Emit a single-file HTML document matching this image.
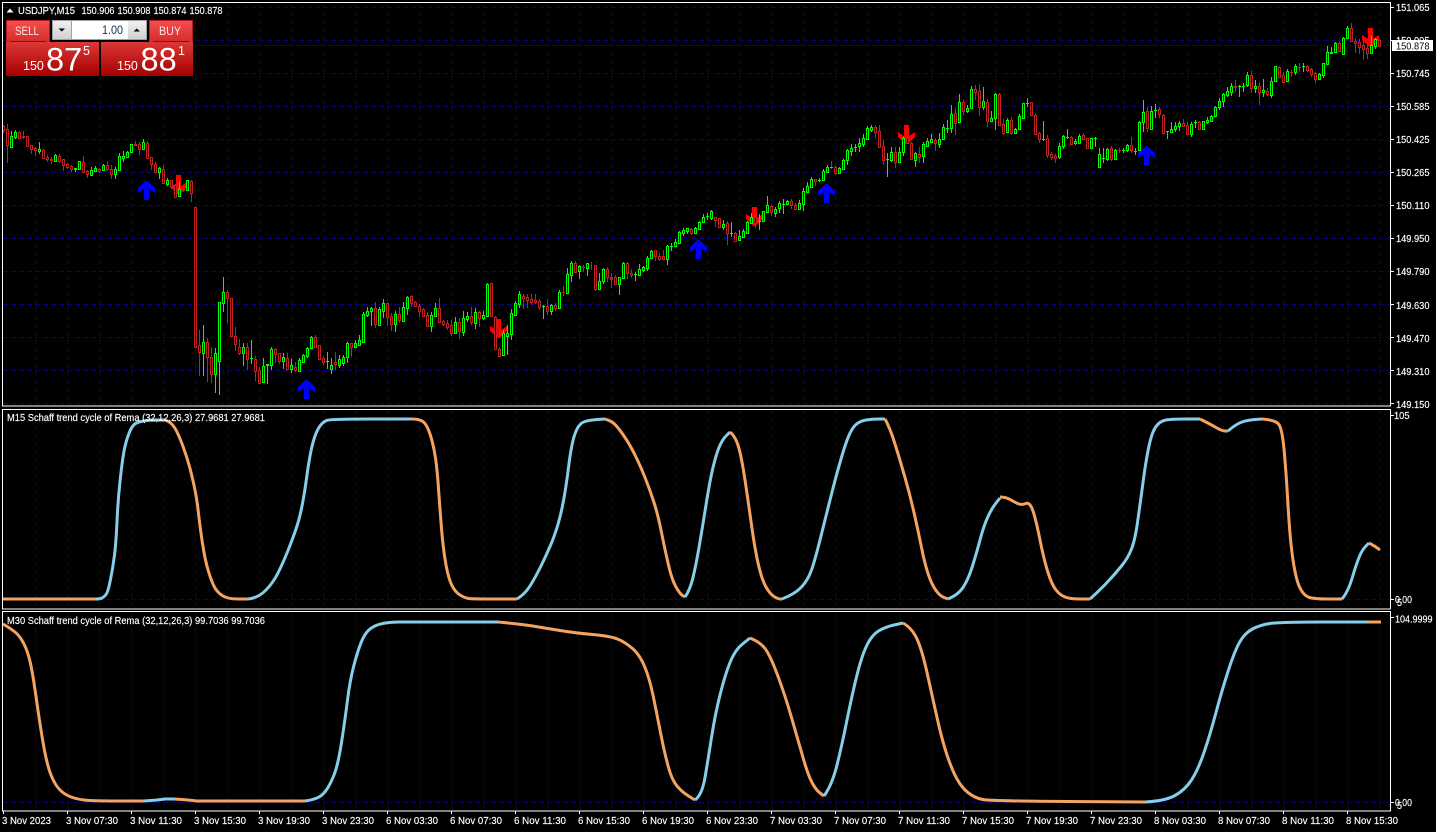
<!DOCTYPE html>
<html><head><meta charset="utf-8"><title>USDJPY,M15</title>
<style>
html,body{margin:0;padding:0;background:#000;width:1436px;height:832px;overflow:hidden}
svg{display:block}
text{font-family:"Liberation Sans",sans-serif;font-size:10.5px;fill:#fff}
.x text{stroke:#fff;stroke-width:.15px}
.c{shape-rendering:crispEdges}
.o{fill:none;stroke:#F4A460;stroke-width:3;stroke-linejoin:round}
.b{fill:none;stroke:#87CEEB;stroke-width:3;stroke-linejoin:round}
</style></head><body>
<svg width="1436" height="832" viewBox="0 0 1436 832" xmlns="http://www.w3.org/2000/svg">
<defs>
<linearGradient id="g1" x1="0" y1="0" x2="0" y2="1"><stop offset="0" stop-color="#f55050"/><stop offset="1" stop-color="#d42c2c"/></linearGradient>
<linearGradient id="g2" x1="0" y1="0" x2="0" y2="1"><stop offset="0" stop-color="#dc3838"/><stop offset="1" stop-color="#a60000"/></linearGradient>
<linearGradient id="g3" x1="0" y1="0" x2="0" y2="1"><stop offset="0" stop-color="#f0f0f0"/><stop offset="1" stop-color="#d0d0d0"/></linearGradient>
<clipPath id="w0"><rect x="3" y="3" width="1387" height="403"/></clipPath>
<clipPath id="w1"><rect x="3" y="410" width="1387" height="199"/></clipPath>
<clipPath id="w2"><rect x="3" y="612" width="1387" height="199"/></clipPath>
</defs>
<rect width="1436" height="832" fill="#000"/>

<!-- grid -->
<g class="c" fill="none" stroke="#00008b" stroke-width="1" stroke-dasharray="5 3">
<path d="M3 7.5H1390M3 40.5H1390M3 73.5H1390M3 106.5H1390M3 139.5H1390M3 172.5H1390M3 205.5H1390M3 238.5H1390M3 271.5H1390M3 304.5H1390M3 337.5H1390M3 370.5H1390M3 403.5H1390M3 599.5H1390M3 802.5H1390"/>
<path d="M35.5 3V406M67.5 3V406M99.5 3V406M131.5 3V406M163.5 3V406M195.5 3V406M227.5 3V406M259.5 3V406M291.5 3V406M323.5 3V406M355.5 3V406M387.5 3V406M419.5 3V406M451.5 3V406M483.5 3V406M515.5 3V406M547.5 3V406M579.5 3V406M611.5 3V406M643.5 3V406M675.5 3V406M707.5 3V406M739.5 3V406M771.5 3V406M803.5 3V406M835.5 3V406M867.5 3V406M899.5 3V406M931.5 3V406M963.5 3V406M995.5 3V406M1027.5 3V406M1059.5 3V406M1091.5 3V406M1123.5 3V406M1155.5 3V406M1187.5 3V406M1219.5 3V406M1251.5 3V406M1283.5 3V406M1315.5 3V406M1347.5 3V406M1379.5 3V406"/>
<path d="M35.5 410V609M67.5 410V609M99.5 410V609M131.5 410V609M163.5 410V609M195.5 410V609M227.5 410V609M259.5 410V609M291.5 410V609M323.5 410V609M355.5 410V609M387.5 410V609M419.5 410V609M451.5 410V609M483.5 410V609M515.5 410V609M547.5 410V609M579.5 410V609M611.5 410V609M643.5 410V609M675.5 410V609M707.5 410V609M739.5 410V609M771.5 410V609M803.5 410V609M835.5 410V609M867.5 410V609M899.5 410V609M931.5 410V609M963.5 410V609M995.5 410V609M1027.5 410V609M1059.5 410V609M1091.5 410V609M1123.5 410V609M1155.5 410V609M1187.5 410V609M1219.5 410V609M1251.5 410V609M1283.5 410V609M1315.5 410V609M1347.5 410V609M1379.5 410V609"/>
<path d="M35.5 612V811M67.5 612V811M99.5 612V811M131.5 612V811M163.5 612V811M195.5 612V811M227.5 612V811M259.5 612V811M291.5 612V811M323.5 612V811M355.5 612V811M387.5 612V811M419.5 612V811M451.5 612V811M483.5 612V811M515.5 612V811M547.5 612V811M579.5 612V811M611.5 612V811M643.5 612V811M675.5 612V811M707.5 612V811M739.5 612V811M771.5 612V811M803.5 612V811M835.5 612V811M867.5 612V811M899.5 612V811M931.5 612V811M963.5 612V811M995.5 612V811M1027.5 612V811M1059.5 612V811M1091.5 612V811M1123.5 612V811M1155.5 612V811M1187.5 612V811M1219.5 612V811M1251.5 612V811M1283.5 612V811M1315.5 612V811M1347.5 612V811M1379.5 612V811"/>
</g>
<path class="c" d="M3 45.5H1390" stroke="#00008b" fill="none"/>

<!-- arrows -->
<path fill="#0000ff" d="M145.5 181H147.5L155 188V193L149 189V200H144V189L138 193V188ZM305.5 380H307.5L315 387V392L309 388V399H304V388L298 392V387ZM697.5 240H699.5L707 247V252L701 248V259H696V248L690 252V247ZM825.5 184H827.5L835 191V196L829 192V203H824V192L818 196V191ZM1145.5 146H1147.5L1155 153V158L1149 154V165H1144V154L1138 158V153Z"/>
<path fill="#ff0000" d="M176 175H181V186L187 182V187L179.5 194H177.5L170 187V182L176 186ZM496 319H501V330L507 326V331L499.5 338H497.5L490 331V326L496 330ZM752 207H757V218L763 214V219L755.5 226H753.5L746 219V214L752 218ZM904 125H909V136L915 132V137L907.5 144H905.5L898 137V132L904 136ZM1368 28H1373V39L1379 35V40L1371.5 47H1369.5L1362 40V35L1368 39Z"/>

<!-- candles -->
<g class="c" clip-path="url(#w0)" stroke-width="1">
<path fill="none" stroke="#c02222" d="M3.5 125V133M7.5 124V163M19.5 131V139M23.5 131V139M27.5 136V146M31.5 145V154M35.5 147V156M43.5 149V158M47.5 155V162M51.5 157V164M59.5 154V163M63.5 159V171M67.5 163V169M71.5 165V172M83.5 156V172M87.5 170V178M99.5 168V173M107.5 161V171M111.5 165V179M135.5 141V146M139.5 142V155M147.5 141V158M151.5 157V170M155.5 162V172M163.5 165V184M171.5 180V189M175.5 184V197M183.5 188V192M191.5 180V202M195.5 207V347M199.5 330V376M207.5 338V382M211.5 347V383M227.5 290V323M231.5 298V336M235.5 327V351M239.5 339V355M247.5 343V370M255.5 356V381M259.5 367V383M275.5 348V363M279.5 353V364M287.5 353V369M295.5 362V372M315.5 335V347M319.5 345V359M323.5 356V365M335.5 352V370M351.5 343V357M375.5 302V328M387.5 303V326M391.5 313V331M399.5 307V323M411.5 295V307M415.5 301V307M419.5 304V317M423.5 308V317M427.5 312V326M439.5 298V323M443.5 320V326M447.5 320V330M451.5 320V336M459.5 318V339M471.5 307V325M479.5 311V327M491.5 283V317M495.5 316V349M499.5 347V357M523.5 294V309M527.5 294V308M531.5 294V305M535.5 294V304M539.5 299V310M547.5 299V315M555.5 303V311M563.5 286V296M575.5 261V273M583.5 265V272M591.5 262V270M595.5 265V291M607.5 267V282M611.5 273V288M615.5 275V285M627.5 262V279M631.5 269V278M655.5 250V261M659.5 253V261M663.5 250V260M691.5 228V235M715.5 217V227M719.5 218V228M727.5 221V245M735.5 232V242M755.5 213V228M771.5 205V216M791.5 199V209M795.5 203V210M815.5 179V186M831.5 161V169M835.5 166V175M875.5 125V138M879.5 125V147M883.5 140V165M895.5 147V168M907.5 135V144M911.5 142V160M919.5 147V163M935.5 138V151M955.5 108V135M963.5 100V115M975.5 85V100M979.5 84V116M987.5 99V127M999.5 93V125M1003.5 119V135M1011.5 117V135M1031.5 102V116M1035.5 113V135M1039.5 132V143M1047.5 135V158M1051.5 152V160M1055.5 154V163M1071.5 136V144M1083.5 133V140M1087.5 138V149M1111.5 146V161M1119.5 148V153M1131.5 137V153M1147.5 107V132M1159.5 107V118M1163.5 114V133M1183.5 119V127M1187.5 122V134M1199.5 121V130M1235.5 80V92M1251.5 71V93M1259.5 82V105M1267.5 88V96M1279.5 66V78M1283.5 72V82M1291.5 70V77M1299.5 63V72M1307.5 65V72M1311.5 68V77M1315.5 72V83M1339.5 41V52M1351.5 23V42M1355.5 38V53M1359.5 39V54M1363.5 41V60M1367.5 43V59M1379.5 39V47"/>
<path fill="none" stroke="#00ff00" d="M11.5 131V147M15.5 130V139M39.5 142V154M55.5 154V162M75.5 168V172M79.5 161V169M91.5 167V175M95.5 166V172M103.5 164V171M115.5 167V179M119.5 153V170M123.5 151V162M127.5 151V157M131.5 144V153M143.5 139V150M159.5 167V179M167.5 178V186M179.5 182V196M187.5 180V190M203.5 325V376M215.5 348V393M219.5 302V395M223.5 277V312M243.5 343V366M251.5 340V364M263.5 358V383M267.5 364V384M271.5 347V370M283.5 353V369M291.5 359V373M299.5 358V371M303.5 354V363M307.5 347V358M311.5 336V349M327.5 352V369M331.5 358V374M339.5 355V368M343.5 355V366M347.5 342V363M355.5 340V348M359.5 335V345M363.5 312V343M367.5 307V317M371.5 307V326M379.5 307V325M383.5 299V318M395.5 311V332M403.5 302V321M407.5 296V315M431.5 312V332M435.5 303V316M455.5 317V334M463.5 311V336M467.5 312V322M475.5 308V329M483.5 311V320M487.5 283V317M503.5 330V356M507.5 325V355M511.5 309V340M515.5 301V315M519.5 291V308M543.5 305V319M551.5 304V315M559.5 290V309M567.5 268V294M571.5 261V282M579.5 265V279M587.5 263V276M599.5 273V290M603.5 268V284M619.5 277V295M623.5 262V278M635.5 272V281M639.5 264V275M643.5 266V272M647.5 256V271M651.5 250V259M667.5 245V265M671.5 243V251M675.5 239V247M679.5 231V243M683.5 228V236M687.5 228V234M695.5 227V234M699.5 221V229M703.5 214V223M707.5 213V220M711.5 210V220M723.5 220V230M731.5 222V237M739.5 230V241M743.5 229V237M747.5 221V234M751.5 213V224M759.5 214V230M763.5 211V222M767.5 196V212M775.5 207V217M779.5 201V213M783.5 199V214M787.5 200V204M799.5 200V209M803.5 188V211M807.5 182V193M811.5 177V188M819.5 178V182M823.5 169V181M827.5 165V173M839.5 167V173M843.5 159V169M847.5 149V165M851.5 144V156M855.5 144V152M859.5 138V152M863.5 134V147M867.5 126V139M871.5 125V132M887.5 153V177M891.5 147V162M899.5 147V162M903.5 137V156M915.5 152V167M923.5 142V163M927.5 138V147M931.5 134V143M939.5 133V148M943.5 124V140M947.5 120V133M951.5 105V133M959.5 94V123M967.5 105V113M971.5 86V109M983.5 87V110M991.5 111V122M995.5 93V130M1007.5 118V133M1015.5 128V134M1019.5 114V130M1023.5 103V118M1027.5 98V107M1043.5 121V141M1059.5 143V159M1063.5 135V149M1067.5 129V139M1075.5 139V145M1079.5 134V143M1091.5 138V149M1095.5 137V147M1099.5 148V167M1103.5 148V163M1107.5 148V161M1115.5 149V159M1123.5 148V153M1127.5 144V152M1135.5 148V155M1139.5 121V151M1143.5 100V132M1151.5 106V129M1155.5 104V118M1167.5 131V139M1171.5 122V133M1175.5 122V132M1179.5 121V131M1191.5 122V137M1195.5 120V128M1203.5 121V130M1207.5 117V124M1211.5 115V122M1215.5 106V117M1219.5 98V110M1223.5 93V107M1227.5 87V97M1231.5 83V96M1239.5 85V97M1243.5 83V92M1247.5 72V87M1255.5 80V93M1263.5 79V97M1271.5 77V98M1275.5 66V82M1287.5 69V82M1295.5 64V75M1303.5 63V72M1319.5 73V79M1323.5 63V78M1327.5 46V65M1331.5 47V54M1335.5 42V53M1343.5 37V54M1347.5 26V39M1371.5 36V54M1375.5 38V49"/>
<path fill="#000" stroke="#c02222" d="M2.5 126.5h2V130.5h-2zM6.5 129.5h2V145.5h-2zM18.5 132.5h2V138.5h-2zM22.5 136.5h2V137.5h-2zM26.5 136.5h2V146.5h-2zM30.5 145.5h2V149.5h-2zM34.5 148.5h2V150.5h-2zM42.5 150.5h2V158.5h-2zM46.5 157.5h2V159.5h-2zM50.5 159.5h2V160.5h-2zM58.5 156.5h2V161.5h-2zM62.5 159.5h2V165.5h-2zM66.5 164.5h2V167.5h-2zM70.5 166.5h2V169.5h-2zM82.5 162.5h2V172.5h-2zM86.5 171.5h2V174.5h-2zM98.5 169.5h2V171.5h-2zM106.5 165.5h2V169.5h-2zM110.5 169.5h2V174.5h-2zM134.5 144.5h2V145.5h-2zM138.5 144.5h2V149.5h-2zM146.5 143.5h2V158.5h-2zM150.5 157.5h2V164.5h-2zM154.5 164.5h2V172.5h-2zM162.5 169.5h2V183.5h-2zM170.5 180.5h2V186.5h-2zM174.5 185.5h2V197.5h-2zM182.5 189.5h2V190.5h-2zM190.5 181.5h2V193.5h-2zM194.5 207.5h2V347.5h-2zM198.5 345.5h2V352.5h-2zM206.5 342.5h2V357.5h-2zM210.5 357.5h2V374.5h-2zM226.5 292.5h2V298.5h-2zM230.5 298.5h2V336.5h-2zM234.5 336.5h2V344.5h-2zM238.5 347.5h2V353.5h-2zM246.5 347.5h2V359.5h-2zM254.5 359.5h2V371.5h-2zM258.5 370.5h2V383.5h-2zM274.5 349.5h2V354.5h-2zM278.5 353.5h2V361.5h-2zM286.5 358.5h2V369.5h-2zM294.5 367.5h2V370.5h-2zM314.5 337.5h2V347.5h-2zM318.5 345.5h2V359.5h-2zM322.5 358.5h2V362.5h-2zM334.5 362.5h2V364.5h-2zM350.5 343.5h2V347.5h-2zM374.5 308.5h2V324.5h-2zM386.5 303.5h2V317.5h-2zM390.5 316.5h2V324.5h-2zM398.5 314.5h2V320.5h-2zM410.5 296.5h2V303.5h-2zM414.5 302.5h2V306.5h-2zM418.5 306.5h2V311.5h-2zM422.5 309.5h2V316.5h-2zM426.5 315.5h2V326.5h-2zM438.5 308.5h2V322.5h-2zM442.5 321.5h2V324.5h-2zM446.5 323.5h2V327.5h-2zM450.5 325.5h2V333.5h-2zM458.5 322.5h2V331.5h-2zM470.5 316.5h2V322.5h-2zM478.5 312.5h2V318.5h-2zM490.5 283.5h2V316.5h-2zM494.5 317.5h2V349.5h-2zM498.5 349.5h2V356.5h-2zM522.5 296.5h2V298.5h-2zM526.5 297.5h2V300.5h-2zM530.5 299.5h2V302.5h-2zM534.5 300.5h2V302.5h-2zM538.5 301.5h2V307.5h-2zM546.5 306.5h2V311.5h-2zM554.5 305.5h2V308.5h-2zM574.5 263.5h2V272.5h-2zM594.5 265.5h2V289.5h-2zM606.5 269.5h2V277.5h-2zM610.5 277.5h2V279.5h-2zM614.5 277.5h2V284.5h-2zM626.5 263.5h2V273.5h-2zM630.5 273.5h2V275.5h-2zM654.5 250.5h2V256.5h-2zM658.5 256.5h2V259.5h-2zM662.5 256.5h2V259.5h-2zM690.5 229.5h2V233.5h-2zM714.5 217.5h2V220.5h-2zM718.5 218.5h2V227.5h-2zM726.5 223.5h2V233.5h-2zM734.5 233.5h2V241.5h-2zM754.5 217.5h2V223.5h-2zM770.5 206.5h2V212.5h-2zM790.5 201.5h2V205.5h-2zM794.5 205.5h2V209.5h-2zM814.5 179.5h2V181.5h-2zM834.5 167.5h2V173.5h-2zM874.5 127.5h2V132.5h-2zM878.5 131.5h2V147.5h-2zM882.5 146.5h2V160.5h-2zM894.5 152.5h2V162.5h-2zM906.5 138.5h2V143.5h-2zM910.5 143.5h2V159.5h-2zM918.5 154.5h2V157.5h-2zM934.5 140.5h2V143.5h-2zM954.5 113.5h2V123.5h-2zM962.5 102.5h2V111.5h-2zM974.5 89.5h2V92.5h-2zM978.5 91.5h2V107.5h-2zM986.5 102.5h2V121.5h-2zM998.5 94.5h2V125.5h-2zM1002.5 124.5h2V133.5h-2zM1010.5 120.5h2V133.5h-2zM1030.5 102.5h2V115.5h-2zM1034.5 115.5h2V134.5h-2zM1038.5 133.5h2V139.5h-2zM1046.5 138.5h2V155.5h-2zM1050.5 154.5h2V157.5h-2zM1054.5 156.5h2V158.5h-2zM1070.5 137.5h2V144.5h-2zM1082.5 135.5h2V139.5h-2zM1086.5 138.5h2V148.5h-2zM1110.5 148.5h2V159.5h-2zM1130.5 145.5h2V150.5h-2zM1146.5 111.5h2V128.5h-2zM1158.5 109.5h2V114.5h-2zM1162.5 115.5h2V133.5h-2zM1182.5 123.5h2V126.5h-2zM1186.5 125.5h2V134.5h-2zM1198.5 122.5h2V129.5h-2zM1234.5 86.5h2V87.5h-2zM1250.5 75.5h2V88.5h-2zM1258.5 86.5h2V92.5h-2zM1266.5 91.5h2V94.5h-2zM1278.5 67.5h2V77.5h-2zM1282.5 75.5h2V82.5h-2zM1306.5 66.5h2V70.5h-2zM1310.5 69.5h2V74.5h-2zM1314.5 73.5h2V79.5h-2zM1338.5 43.5h2V51.5h-2zM1350.5 28.5h2V41.5h-2zM1354.5 41.5h2V43.5h-2zM1358.5 42.5h2V47.5h-2zM1362.5 45.5h2V49.5h-2zM1366.5 48.5h2V53.5h-2zM1378.5 40.5h2V46.5h-2zM562 292.5h3M582 267.5h3M610 278.5h3M1290 72.5h3M1298 67.5h3M1118 150.5h3"/>
<path fill="#000" stroke="#00ff00" d="M10.5 136.5h2V147.5h-2zM14.5 132.5h2V137.5h-2zM38.5 149.5h2V151.5h-2zM54.5 155.5h2V161.5h-2zM74.5 168.5h2V169.5h-2zM78.5 161.5h2V169.5h-2zM90.5 170.5h2V175.5h-2zM94.5 168.5h2V171.5h-2zM102.5 165.5h2V170.5h-2zM114.5 169.5h2V174.5h-2zM118.5 156.5h2V170.5h-2zM122.5 156.5h2V158.5h-2zM126.5 152.5h2V157.5h-2zM130.5 144.5h2V152.5h-2zM142.5 142.5h2V149.5h-2zM158.5 168.5h2V172.5h-2zM166.5 180.5h2V184.5h-2zM178.5 189.5h2V196.5h-2zM186.5 180.5h2V190.5h-2zM202.5 342.5h2V353.5h-2zM214.5 353.5h2V374.5h-2zM218.5 302.5h2V361.5h-2zM222.5 292.5h2V303.5h-2zM242.5 347.5h2V353.5h-2zM250 358.5h3M262.5 366.5h2V382.5h-2zM266 364.5h3M266 365.5h3M270.5 349.5h2V365.5h-2zM282.5 357.5h2V361.5h-2zM290.5 365.5h2V369.5h-2zM298.5 360.5h2V371.5h-2zM302.5 355.5h2V362.5h-2zM306.5 348.5h2V356.5h-2zM310.5 337.5h2V348.5h-2zM326 361.5h3M330.5 365.5h2V369.5h-2zM338.5 359.5h2V365.5h-2zM342.5 357.5h2V363.5h-2zM346.5 343.5h2V357.5h-2zM354.5 343.5h2V347.5h-2zM358.5 340.5h2V345.5h-2zM362.5 314.5h2V342.5h-2zM366.5 311.5h2V315.5h-2zM370.5 308.5h2V311.5h-2zM378.5 309.5h2V325.5h-2zM382.5 303.5h2V311.5h-2zM394.5 314.5h2V324.5h-2zM402.5 307.5h2V321.5h-2zM406.5 297.5h2V308.5h-2zM430.5 315.5h2V326.5h-2zM434.5 308.5h2V316.5h-2zM454.5 322.5h2V333.5h-2zM462.5 318.5h2V332.5h-2zM466.5 316.5h2V319.5h-2zM474.5 312.5h2V323.5h-2zM482.5 315.5h2V318.5h-2zM486.5 284.5h2V316.5h-2zM502.5 333.5h2V355.5h-2zM506.5 333.5h2V336.5h-2zM510.5 313.5h2V334.5h-2zM514.5 303.5h2V315.5h-2zM518.5 294.5h2V304.5h-2zM542 306.5h3M550.5 305.5h2V311.5h-2zM558.5 292.5h2V308.5h-2zM566.5 274.5h2V293.5h-2zM570.5 263.5h2V275.5h-2zM578.5 266.5h2V271.5h-2zM586.5 263.5h2V268.5h-2zM598.5 281.5h2V289.5h-2zM602.5 269.5h2V281.5h-2zM618.5 277.5h2V284.5h-2zM622.5 263.5h2V278.5h-2zM634 274.5h3M638.5 269.5h2V275.5h-2zM642.5 267.5h2V270.5h-2zM646.5 258.5h2V268.5h-2zM650.5 251.5h2V258.5h-2zM666.5 246.5h2V259.5h-2zM670 246.5h3M674.5 242.5h2V246.5h-2zM678.5 232.5h2V243.5h-2zM682.5 230.5h2V233.5h-2zM686.5 228.5h2V231.5h-2zM694.5 228.5h2V233.5h-2zM698.5 222.5h2V229.5h-2zM702.5 217.5h2V222.5h-2zM706 216.5h3M710.5 211.5h2V218.5h-2zM722.5 224.5h2V227.5h-2zM730 233.5h3M738.5 236.5h2V240.5h-2zM742.5 231.5h2V237.5h-2zM746.5 222.5h2V233.5h-2zM750.5 217.5h2V223.5h-2zM758 221.5h3M762.5 211.5h2V221.5h-2zM766.5 205.5h2V212.5h-2zM774.5 209.5h2V213.5h-2zM778.5 203.5h2V208.5h-2zM782 204.5h3M786.5 201.5h2V204.5h-2zM798.5 203.5h2V209.5h-2zM802.5 191.5h2V204.5h-2zM806.5 186.5h2V192.5h-2zM810.5 179.5h2V187.5h-2zM818 180.5h3M822.5 171.5h2V180.5h-2zM826.5 167.5h2V172.5h-2zM830 167.5h3M838.5 168.5h2V173.5h-2zM842.5 160.5h2V169.5h-2zM846.5 150.5h2V160.5h-2zM850.5 148.5h2V151.5h-2zM854 147.5h3M858.5 143.5h2V146.5h-2zM862.5 138.5h2V144.5h-2zM866.5 128.5h2V139.5h-2zM870.5 127.5h2V130.5h-2zM886 159.5h3M890.5 152.5h2V160.5h-2zM898.5 152.5h2V162.5h-2zM902.5 138.5h2V152.5h-2zM914.5 153.5h2V160.5h-2zM922.5 144.5h2V156.5h-2zM926.5 141.5h2V146.5h-2zM930.5 139.5h2V142.5h-2zM938.5 139.5h2V144.5h-2zM942.5 127.5h2V139.5h-2zM946 128.5h3M950.5 114.5h2V128.5h-2zM958.5 102.5h2V122.5h-2zM966.5 108.5h2V111.5h-2zM970.5 89.5h2V108.5h-2zM982.5 101.5h2V107.5h-2zM990.5 118.5h2V121.5h-2zM994.5 94.5h2V118.5h-2zM1006.5 120.5h2V132.5h-2zM1014.5 129.5h2V133.5h-2zM1018.5 116.5h2V129.5h-2zM1022.5 103.5h2V118.5h-2zM1026 103.5h3M1042 139.5h3M1058.5 146.5h2V157.5h-2zM1062.5 136.5h2V146.5h-2zM1066 137.5h3M1074.5 141.5h2V143.5h-2zM1078.5 136.5h2V143.5h-2zM1090.5 138.5h2V148.5h-2zM1094 138.5h3M1098.5 154.5h2V167.5h-2zM1102 158.5h3M1106.5 149.5h2V159.5h-2zM1114.5 150.5h2V159.5h-2zM1122 150.5h3M1126.5 145.5h2V150.5h-2zM1134 151.5h3M1138.5 122.5h2V150.5h-2zM1142.5 112.5h2V122.5h-2zM1150.5 111.5h2V129.5h-2zM1154 110.5h3M1166 131.5h3M1170.5 129.5h2V132.5h-2zM1174.5 126.5h2V129.5h-2zM1178.5 123.5h2V126.5h-2zM1190.5 124.5h2V134.5h-2zM1194 122.5h3M1202.5 121.5h2V129.5h-2zM1206.5 120.5h2V122.5h-2zM1210.5 116.5h2V121.5h-2zM1214.5 107.5h2V116.5h-2zM1218.5 101.5h2V107.5h-2zM1222.5 94.5h2V101.5h-2zM1226.5 91.5h2V95.5h-2zM1230.5 86.5h2V92.5h-2zM1238 86.5h3M1242 86.5h3M1246.5 75.5h2V85.5h-2zM1254.5 86.5h2V88.5h-2zM1262.5 90.5h2V92.5h-2zM1270.5 81.5h2V95.5h-2zM1274.5 66.5h2V81.5h-2zM1286.5 71.5h2V81.5h-2zM1294.5 66.5h2V72.5h-2zM1302 66.5h3M1318.5 74.5h2V79.5h-2zM1322.5 63.5h2V75.5h-2zM1326.5 52.5h2V64.5h-2zM1330.5 52.5h2V53.5h-2zM1334.5 43.5h2V52.5h-2zM1342.5 38.5h2V54.5h-2zM1346.5 28.5h2V38.5h-2zM1370.5 45.5h2V53.5h-2zM1374.5 39.5h2V46.5h-2z"/>
</g>

<!-- window 1 curve -->
<g clip-path="url(#w1)">
<path class="o" d="M3 599H96"/>
<path class="b" d="M96 599Q100 599 102 598T106 594.5T110.5 579.5T114.5 555T117 521.5T120 481.5T123.5 454T127.5 437.5T132.5 426.5T139 422T146.5 420.5T157.5 420L165 420"/>
<path class="o" d="M165 420Q171 422 174.5 427.5T182.5 445T190 468.5T195 490T198.5 513.5T202.5 543.5T208.5 571.5T215 588T223 596T238 599L248 599"/>
<path class="b" d="M248 599Q258 598 265.5 590.5T278 573T288 550.5T296.5 527.5T302.5 503.5T306.5 478.5T310 456T314.5 437.5T320 426T326.5 420.5T371 419L412 419"/>
<path class="o" d="M412 419Q420 419 423.5 422T430 434T435 455T438.5 488.5T441.5 528.5T445.5 562T451.5 584.5T460 595T468.5 598.5T494.5 599L517 599"/>
<path class="b" d="M517 599Q525 594 530 586T540 568T550 546.5T558.5 522.5T564.5 495T568.5 467.5T572 445T577 429T585 421.5T597.5 419.5L605 419"/>
<path class="o" d="M605 419Q612 421 616 425.5T625 437.5T635 455T645 477.5T654 502.5T661.5 532.5T668.5 565T676 587T682.5 595.5L685 597"/>
<path class="b" d="M685 597Q690 590 693 577.5T699 547.5T706 505T713 467.5T719 447.5T726 436L730 432"/>
<path class="o" d="M730 432Q736 437 739 448.5T745 480T751.5 525T758.5 565T766 587T774 596.5T780 599L782 599"/>
<path class="b" d="M782 599Q795 594 801.5 587T811.5 570T820 540T830 500T840 462.5T848.5 436.5T856 424.5T866 420T878.5 419L885 419"/>
<path class="o" d="M885 419Q890 428 895 444T905 477.5T914 512.5T921.5 547.5T928.5 575T936 590.5T944 597.5L948 599"/>
<path class="b" d="M948 599Q958 595 963 587.5T972 567.5T980 540T988 516.5T996 503L1000 498"/>
<path class="o" d="M1000 497Q1006 497 1011 500T1019 504T1026 503.5T1033 511T1040 540T1048 572.5T1056 590T1065 597T1080 599L1090 599"/>
<path class="b" d="M1090 599Q1100 590 1107.5 582T1121.5 566T1131.5 549T1137.5 522.5T1143 482.5T1149 446T1156 426.5T1166 420T1186 419L1200 419"/>
<path class="o" d="M1200 419Q1210 424 1216 427.5T1225 431L1228 431"/>
<path class="b" d="M1228 431Q1236 424 1242 422T1255 419.5L1262 419"/>
<path class="o" d="M1262 419Q1275 420 1278.5 424T1284 449T1288 505T1293 560T1300 588T1309.5 597.5T1328.5 599L1342 599"/>
<path class="b" d="M1342 599Q1348 592 1352 578.5T1359 557.5T1365.5 546.5L1369 543"/>
<path class="o" d="M1369 543Q1375 546 1380 550"/>
</g>

<!-- window 2 curve -->
<g clip-path="url(#w2)">
<path class="o" d="M3 624Q10 628 15 632T24 644T30.5 663.5T36.5 700T43.5 745T51 775T60 790T72.5 797.5T90 800.5T122 801L144 801"/>
<path class="b" d="M144 801L157 800L165 799L175 799"/>
<path class="o" d="M175 799L188 800L197 801L305 801"/>
<path class="b" d="M305 801Q312 800 317 798T326 790.5T334 775T341.5 742.5T347.5 700T354 665T361.5 641.5T370 629T382.5 623.5T400 622T454 622L498 622"/>
<path class="o" d="M498 622Q520 624 532.5 626T560 630.5T592.5 634.5T617.5 639T632.5 648.5T645 667.5T654 700T661.5 737.5T668.5 767.5T677 786T688.5 796L695 800"/>
<path class="b" d="M695 800Q702 795 705 777.5T711.5 737.5T720 695T730 662.5T742.5 644L750 638"/>
<path class="o" d="M750 638Q760 642 765 648.5T777.5 675T791.5 717.5T803 757.5T812 782.5T820 793L824 796"/>
<path class="b" d="M824 796Q832 785 837 765T847 720T857 675T867 645T878.5 631T894 625L903 623"/>
<path class="o" d="M903 623Q912 628 917 639T927 672.5T937 717.5T947 755T957 779T968.5 793T982.5 799.5T1067.5 801.5L1145 802"/>
<path class="b" d="M1145 802Q1165 801 1175 795.5T1191.5 780T1204 752.5T1216 712.5T1228.5 670T1240 641.5T1252.5 629T1270 623.5T1323.5 622L1367 622"/>
<path class="o" d="M1367 622L1381 622"/>
</g>

<!-- frames -->
<g class="c" fill="none" stroke="#fff" stroke-width="1">
<rect x="2.5" y="2.5" width="1388" height="403.5"/>
<rect x="2.5" y="409.5" width="1388" height="199.5"/>
<rect x="2.5" y="611.5" width="1388" height="199.5"/>
<path d="M1391 7.5h3M1391 40.5h3M1391 73.5h3M1391 106.5h3M1391 139.5h3M1391 172.5h3M1391 205.5h3M1391 238.5h3M1391 271.5h3M1391 304.5h3M1391 337.5h3M1391 370.5h3M1391 403.5h3M1391 415.5h3M1391 599.5h3M1391 617.5h3M1391 802.5h3"/>
<path d="M3.5 811v3M67.5 811v3M131.5 811v3M195.5 811v3M259.5 811v3M323.5 811v3M387.5 811v3M451.5 811v3M515.5 811v3M579.5 811v3M643.5 811v3M707.5 811v3M771.5 811v3M835.5 811v3M899.5 811v3M963.5 811v3M1027.5 811v3M1091.5 811v3M1155.5 811v3M1219.5 811v3M1283.5 811v3M1347.5 811v3"/>
</g>

<g class="x">
<!-- price labels -->
<text x="1396" y="11" textLength="33.5" lengthAdjust="spacingAndGlyphs">151.065</text>
<text x="1396" y="44" textLength="33.5" lengthAdjust="spacingAndGlyphs">150.905</text>
<text x="1396" y="77" textLength="33.5" lengthAdjust="spacingAndGlyphs">150.745</text>
<text x="1396" y="110" textLength="33.5" lengthAdjust="spacingAndGlyphs">150.585</text>
<text x="1396" y="143" textLength="33.5" lengthAdjust="spacingAndGlyphs">150.425</text>
<text x="1396" y="176" textLength="33.5" lengthAdjust="spacingAndGlyphs">150.265</text>
<text x="1396" y="209" textLength="33.5" lengthAdjust="spacingAndGlyphs">150.110</text>
<text x="1396" y="242" textLength="33.5" lengthAdjust="spacingAndGlyphs">149.950</text>
<text x="1396" y="275" textLength="33.5" lengthAdjust="spacingAndGlyphs">149.790</text>
<text x="1396" y="309" textLength="33.5" lengthAdjust="spacingAndGlyphs">149.630</text>
<text x="1396" y="342" textLength="33.5" lengthAdjust="spacingAndGlyphs">149.470</text>
<text x="1396" y="375" textLength="33.5" lengthAdjust="spacingAndGlyphs">149.310</text>
<text x="1396" y="408" textLength="33.5" lengthAdjust="spacingAndGlyphs">149.150</text>
</g>
<rect x="1392" y="40" width="41" height="11" fill="#fff"/>
<text x="1396" y="49.500" style="fill:#000" textLength="33.5" lengthAdjust="spacingAndGlyphs">150.878</text>
<g class="x">
<text x="1394" y="419" textLength="15.5" lengthAdjust="spacingAndGlyphs">105</text>
<text x="1395" y="603" textLength="17" lengthAdjust="spacingAndGlyphs">0.00</text>
<text x="1397" y="606" textLength="5" lengthAdjust="spacingAndGlyphs">5</text>
<text x="1395" y="622.500" textLength="37.500" lengthAdjust="spacingAndGlyphs">104.9999</text>
<text x="1395" y="806" textLength="17" lengthAdjust="spacingAndGlyphs">0.00</text>
<text x="1397" y="809" textLength="5" lengthAdjust="spacingAndGlyphs">5</text>

<!-- time labels -->
<text x="2" y="824" textLength="49" lengthAdjust="spacingAndGlyphs">3 Nov 2023</text>
<text x="66" y="824" textLength="52" lengthAdjust="spacingAndGlyphs">3 Nov 07:30</text>
<text x="130" y="824" textLength="52" lengthAdjust="spacingAndGlyphs">3 Nov 11:30</text>
<text x="194" y="824" textLength="52" lengthAdjust="spacingAndGlyphs">3 Nov 15:30</text>
<text x="258" y="824" textLength="52" lengthAdjust="spacingAndGlyphs">3 Nov 19:30</text>
<text x="322" y="824" textLength="52" lengthAdjust="spacingAndGlyphs">3 Nov 23:30</text>
<text x="386" y="824" textLength="52" lengthAdjust="spacingAndGlyphs">6 Nov 03:30</text>
<text x="450" y="824" textLength="52" lengthAdjust="spacingAndGlyphs">6 Nov 07:30</text>
<text x="514" y="824" textLength="52" lengthAdjust="spacingAndGlyphs">6 Nov 11:30</text>
<text x="578" y="824" textLength="52" lengthAdjust="spacingAndGlyphs">6 Nov 15:30</text>
<text x="642" y="824" textLength="52" lengthAdjust="spacingAndGlyphs">6 Nov 19:30</text>
<text x="706" y="824" textLength="52" lengthAdjust="spacingAndGlyphs">6 Nov 23:30</text>
<text x="770" y="824" textLength="52" lengthAdjust="spacingAndGlyphs">7 Nov 03:30</text>
<text x="834" y="824" textLength="52" lengthAdjust="spacingAndGlyphs">7 Nov 07:30</text>
<text x="898" y="824" textLength="52" lengthAdjust="spacingAndGlyphs">7 Nov 11:30</text>
<text x="962" y="824" textLength="52" lengthAdjust="spacingAndGlyphs">7 Nov 15:30</text>
<text x="1026" y="824" textLength="52" lengthAdjust="spacingAndGlyphs">7 Nov 19:30</text>
<text x="1090" y="824" textLength="52" lengthAdjust="spacingAndGlyphs">7 Nov 23:30</text>
<text x="1154" y="824" textLength="52" lengthAdjust="spacingAndGlyphs">8 Nov 03:30</text>
<text x="1218" y="824" textLength="52" lengthAdjust="spacingAndGlyphs">8 Nov 07:30</text>
<text x="1282" y="824" textLength="52" lengthAdjust="spacingAndGlyphs">8 Nov 11:30</text>
<text x="1346" y="824" textLength="52" lengthAdjust="spacingAndGlyphs">8 Nov 15:30</text>

<!-- window titles -->
<text x="7" y="421" textLength="258" lengthAdjust="spacingAndGlyphs">M15 Schaff trend cycle of Rema (32,12,26,3) 27.9681 27.9681</text>
<text x="7" y="624" textLength="258" lengthAdjust="spacingAndGlyphs">M30 Schaff trend cycle of Rema (32,12,26,3) 99.7036 99.7036</text>

<!-- header -->
<text x="18" y="14" textLength="57" lengthAdjust="spacingAndGlyphs">USDJPY,M15</text>
<text x="81.500" y="14" textLength="33" lengthAdjust="spacingAndGlyphs">150.906</text>
<text x="117.500" y="14" textLength="33" lengthAdjust="spacingAndGlyphs">150.908</text>
<text x="153.500" y="14" textLength="33" lengthAdjust="spacingAndGlyphs">150.874</text>
<text x="189.500" y="14" textLength="33" lengthAdjust="spacingAndGlyphs">150.878</text>
</g>
<path d="M6.5 12.5L10 8.5L13.5 12.5Z" fill="#fff"/>

<!-- trading panel -->
<rect x="50" y="20" width="99" height="22" fill="#000"/>
<rect x="6" y="20" width="44" height="22" fill="url(#g1)"/>
<rect x="149" y="20" width="44" height="22" fill="url(#g1)"/>
<path class="c" d="M10 41.5H46M153 41.5H189" stroke="#8a1010" fill="none"/>
<path class="c" d="M6.5 42V20.5H49.5V42M149.5 42V20.5H192.5V42" stroke="#b81818" fill="none"/>
<rect x="6" y="42" width="93" height="34" fill="url(#g2)"/>
<rect x="101" y="42" width="92" height="34" fill="url(#g2)"/>
<rect x="52" y="20" width="95" height="20" fill="#a0a0a0"/>
<rect x="53" y="21" width="18" height="18" fill="url(#g3)"/>
<rect x="128" y="21" width="18" height="18" fill="url(#g3)"/>
<rect x="72" y="21" width="56" height="18" fill="#fff"/>
<path d="M58.5 28.5H65L61.75 31.5Z" fill="#000"/>
<path d="M133.5 31.5H140L136.75 28.5Z" fill="#000"/>
<text x="102" y="34" style="font-size:12px;fill:#1a2a50" textLength="21" lengthAdjust="spacingAndGlyphs">1.00</text>
<text x="15" y="35" style="font-size:12px;fill:#ffe6e6" textLength="24" lengthAdjust="spacingAndGlyphs">SELL</text>
<text x="159" y="35" style="font-size:12px;fill:#ffe6e6" textLength="22" lengthAdjust="spacingAndGlyphs">BUY</text>
<text x="23" y="70" style="font-size:12.5px">150</text>
<text x="46" y="70.5" style="font-size:32.5px">87</text>
<text x="83" y="55" style="font-size:12.5px">5</text>
<text x="117" y="70" style="font-size:12.5px">150</text>
<text x="140.5" y="70.5" style="font-size:32.5px">88</text>
<text x="178" y="55" style="font-size:12.5px">1</text>
</svg>
</body></html>
